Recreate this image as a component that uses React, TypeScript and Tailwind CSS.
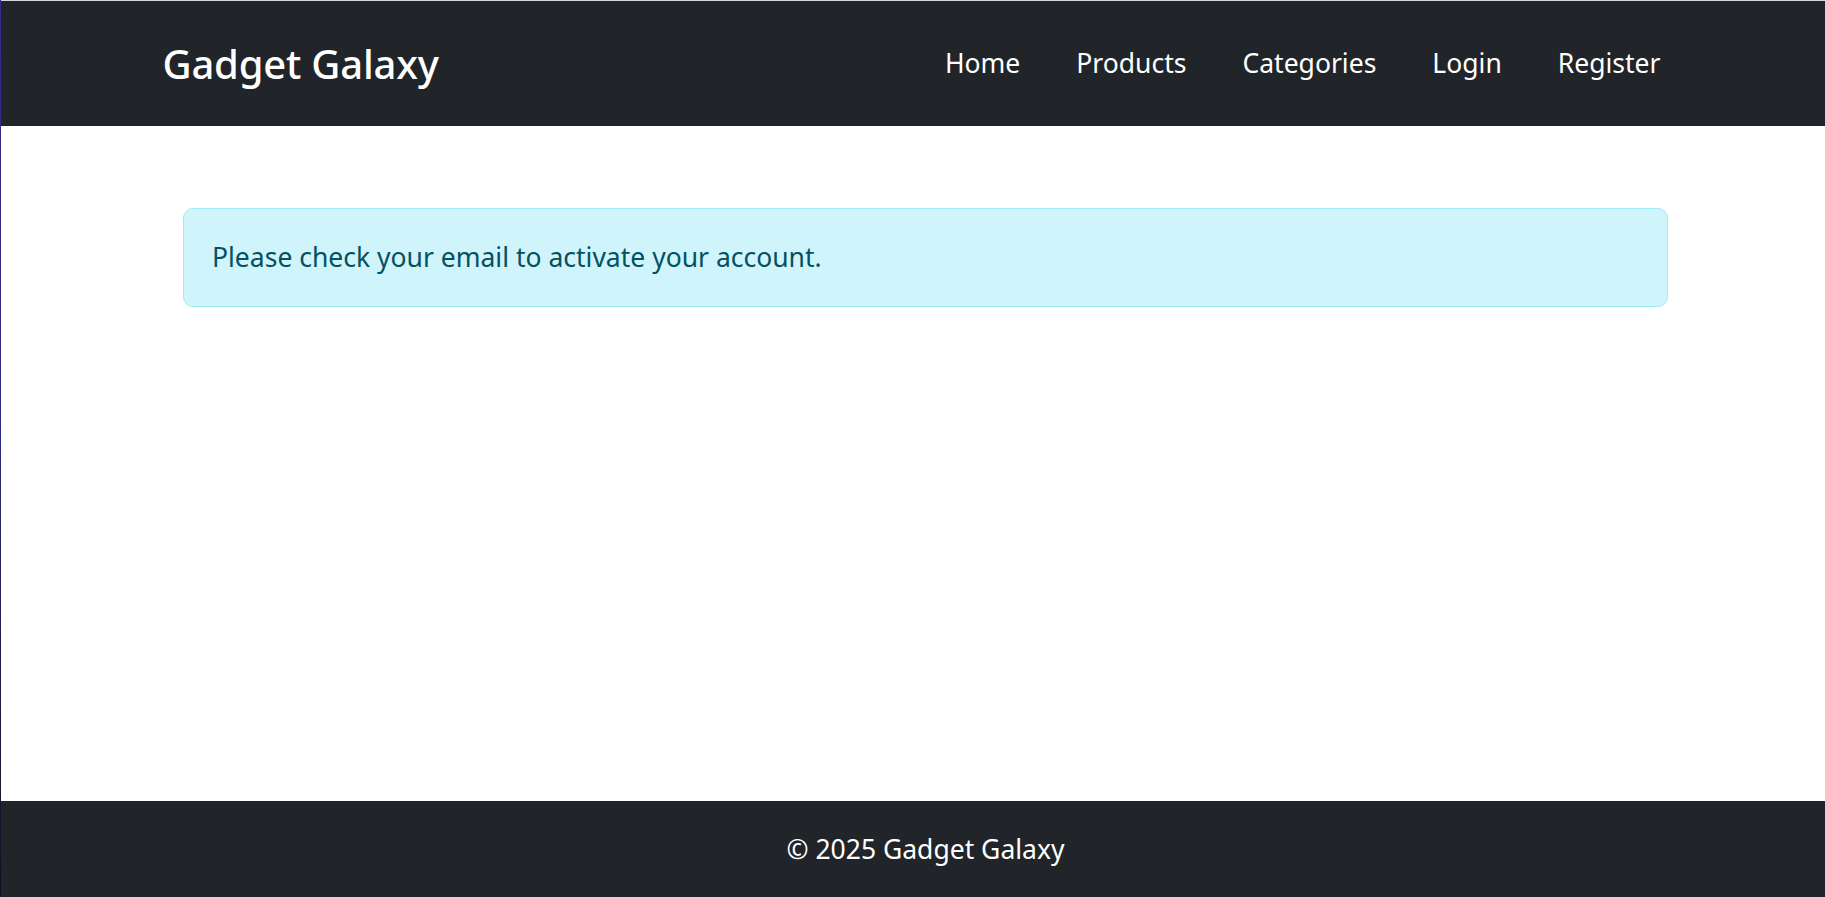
import React from "react";

export default function App() {
  const navItems = ["Home", "Products", "Categories", "Login", "Register"];
  return (
    <div
      className="flex h-[897px] w-full overflow-hidden bg-white"
      style={{ fontFamily: '"Noto Sans", "Open Sans", sans-serif' }}
    >
      <div className="w-px shrink-0 bg-gradient-to-b from-[#3a2a8a] via-[#2a2a7a] to-[#101020]" />
      <div className="flex min-w-0 flex-1 flex-col">
        <div className="h-px w-full bg-[#d6d6d6]" />
        <header className="h-[125px] w-full bg-[#212529]">
          <div className="mx-auto flex h-full w-[1495px] items-center justify-between">
            <span className="-ml-[3px] text-[40px] font-medium leading-none tracking-[-0.2px] text-white">
              Gadget Galaxy
            </span>
            <nav className="flex items-center gap-[56px]">
              {navItems.map((n) => (
                <a key={n} className="text-[26.5px] leading-none text-white">
                  {n}
                </a>
              ))}
            </nav>
          </div>
        </header>
        <main className="flex-1 pt-[82px]">
          <div className="ml-[182px] flex h-[99px] w-[1485px] items-center rounded-[10px] border border-[#9eeaf9] bg-[#cff4fc] pl-[28px]">
            <p className="text-[26.5px] leading-none text-[#055160]">
              Please check your email to activate your account.
            </p>
          </div>
        </main>
        <footer className="flex h-[96px] w-full items-center bg-[#212529]">
          <div className="ml-[182px] w-[1485px] text-center text-[26.5px] leading-none text-white">
            © 2025 Gadget Galaxy
          </div>
        </footer>
      </div>
    </div>
  );
}
